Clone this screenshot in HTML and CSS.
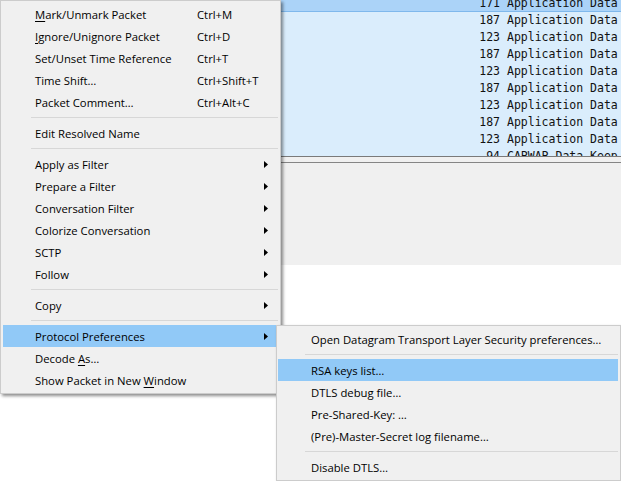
FILE: index.html
```html
<!DOCTYPE html>
<html>
<head>
<meta charset="utf-8">
<link rel="stylesheet" href="styles.css">
</head>
<body>
<div class="screen">
  <div class="packet-list">
    <div class="row selected"><span></span><span class="len">171</span><span class="info">Application Data</span></div>
    <div class="row"><span></span><span class="len">187</span><span class="info">Application Data</span></div>
    <div class="row"><span></span><span class="len">123</span><span class="info">Application Data</span></div>
    <div class="row"><span></span><span class="len">187</span><span class="info">Application Data</span></div>
    <div class="row"><span></span><span class="len">123</span><span class="info">Application Data</span></div>
    <div class="row"><span></span><span class="len">187</span><span class="info">Application Data</span></div>
    <div class="row"><span></span><span class="len">123</span><span class="info">Application Data</span></div>
    <div class="row"><span></span><span class="len">187</span><span class="info">Application Data</span></div>
    <div class="row"><span></span><span class="len">123</span><span class="info">Application Data</span></div>
    <div class="row"><span></span><span class="len">94</span><span class="info">CAPWAP Data Keep-Alive</span></div>
  </div>
  <div class="splitter"></div>
  <div class="details"></div>
  <div class="bytes"></div>

  <div class="menu main-menu">
    <div class="item"><span class="label"><u>M</u>ark/Unmark Packet</span><span class="shortcut">Ctrl+M</span></div>
    <div class="item"><span class="label"><u>I</u>gnore/Unignore Packet</span><span class="shortcut">Ctrl+D</span></div>
    <div class="item"><span class="label">Set/Unset Time Reference</span><span class="shortcut">Ctrl+T</span></div>
    <div class="item"><span class="label">Time Shift…</span><span class="shortcut">Ctrl+Shift+T</span></div>
    <div class="item"><span class="label">Packet Comment…</span><span class="shortcut">Ctrl+Alt+C</span></div>
    <div class="sep"></div>
    <div class="item"><span class="label">Edit Resolved Name</span></div>
    <div class="sep"></div>
    <div class="item"><span class="label">Apply as Filter</span><span class="shortcut"></span><svg class="arrow" width="4" height="7" viewBox="0 0 4 7"><path d="M0 0L4 3.5L0 7Z"/></svg></div>
    <div class="item"><span class="label">Prepare a Filter</span><span class="shortcut"></span><svg class="arrow" width="4" height="7" viewBox="0 0 4 7"><path d="M0 0L4 3.5L0 7Z"/></svg></div>
    <div class="item"><span class="label">Conversation Filter</span><span class="shortcut"></span><svg class="arrow" width="4" height="7" viewBox="0 0 4 7"><path d="M0 0L4 3.5L0 7Z"/></svg></div>
    <div class="item"><span class="label">Colorize Conversation</span><span class="shortcut"></span><svg class="arrow" width="4" height="7" viewBox="0 0 4 7"><path d="M0 0L4 3.5L0 7Z"/></svg></div>
    <div class="item"><span class="label">SCTP</span><span class="shortcut"></span><svg class="arrow" width="4" height="7" viewBox="0 0 4 7"><path d="M0 0L4 3.5L0 7Z"/></svg></div>
    <div class="item"><span class="label">Follow</span><span class="shortcut"></span><svg class="arrow" width="4" height="7" viewBox="0 0 4 7"><path d="M0 0L4 3.5L0 7Z"/></svg></div>
    <div class="sep"></div>
    <div class="item"><span class="label">Copy</span><span class="shortcut"></span><svg class="arrow" width="4" height="7" viewBox="0 0 4 7"><path d="M0 0L4 3.5L0 7Z"/></svg></div>
    <div class="sep"></div>
    <div class="item active"><span class="label">Protocol Preferences</span><span class="shortcut"></span><svg class="arrow" width="4" height="7" viewBox="0 0 4 7"><path d="M0 0L4 3.5L0 7Z"/></svg></div>
    <div class="item"><span class="label">Decode <u>A</u>s…</span></div>
    <div class="item"><span class="label">Show Packet in New <u>W</u>indow</span></div>
  </div>

  <div class="menu sub-menu">
    <div class="item"><span class="label">Open Datagram Transport Layer Security preferences…</span></div>
    <div class="sep"></div>
    <div class="item active"><span class="label">RSA keys list…</span></div>
    <div class="item"><span class="label">DTLS debug file…</span></div>
    <div class="item"><span class="label">Pre-Shared-Key: …</span></div>
    <div class="item"><span class="label">(Pre)-Master-Secret log filename…</span></div>
    <div class="sep"></div>
    <div class="item"><span class="label">Disable DTLS…</span></div>
  </div>
</div>
</body>
</html>
```

FILE: styles.css
```css
* { box-sizing: border-box; }
html, body { margin: 0; padding: 0; }
body {
  width: 621px;
  height: 481px;
  overflow: hidden;
  background: #ffffff;
  font-family: "Open Sans", "Noto Sans", sans-serif;
}
.screen {
  position: relative;
  width: 621px;
  height: 481px;
  display: flex;
  flex-direction: column;
}
.packet-list {
  height: 156px;
  flex: none;
  background: #daedfc;
  overflow: hidden;
  font-family: "DejaVu Sans Mono", "Liberation Mono", monospace;
  font-size: 11.5px;
  color: #111;
}
.row {
  display: grid;
  grid-template-columns: 1fr 28px 114px;
  height: 17px;
  line-height: 17px;
  white-space: nowrap;
}
.row .len { text-align: right; padding-right: 7px; }
.row .info { overflow: visible; }
.row.selected {
  margin-top: -5px;
  background: #abd3f8;
  border-bottom: 1px solid #7fb8ec;
  line-height: 16px;
}
.splitter {
  height: 7px;
  flex: none;
  background: #f0f0f0;
  border-top: 1px solid #7a7a7a;
  border-bottom: 1px solid #858585;
}
.details {
  height: 102px;
  flex: none;
  background: #f0f0f0;
}
.bytes { flex: 1; background: #ffffff; }

.menu {
  position: absolute;
  background: #f0f0f0;
  border: 1px solid #cccccc;
  padding: 2px;
  box-shadow: 2px 2px 3px rgba(0, 0, 0, 0.45);
  font-size: 11.3px;
  color: #000;
}
.main-menu { left: 0; top: 0; width: 281px; }
.sub-menu { left: 276px; top: 325px; width: 345px; padding: 2px 2px 2px 1px; }

.item {
  display: flex;
  align-items: center;
  height: 22px;
  line-height: 20px;
  padding-top: 2px;
  padding-left: 32px;
  padding-right: 10px;
  white-space: nowrap;
}
.sub-menu .item { padding-left: 33px; }
.item.active { background: #91c9f7; }
.item .label { width: 162px; flex: none; }
.sub-menu .item .label { width: auto; }
.item .shortcut { flex: 1; }
.item u { text-decoration: underline; text-underline-offset: 2px; }
.arrow { display: block; fill: #000; margin-top: -2px; }

.sep {
  height: 1px;
  margin: 4px 0 4px 28px;
  background: #d7d7d7;
}
.sub-menu .sep { margin-left: 27px; }
```
